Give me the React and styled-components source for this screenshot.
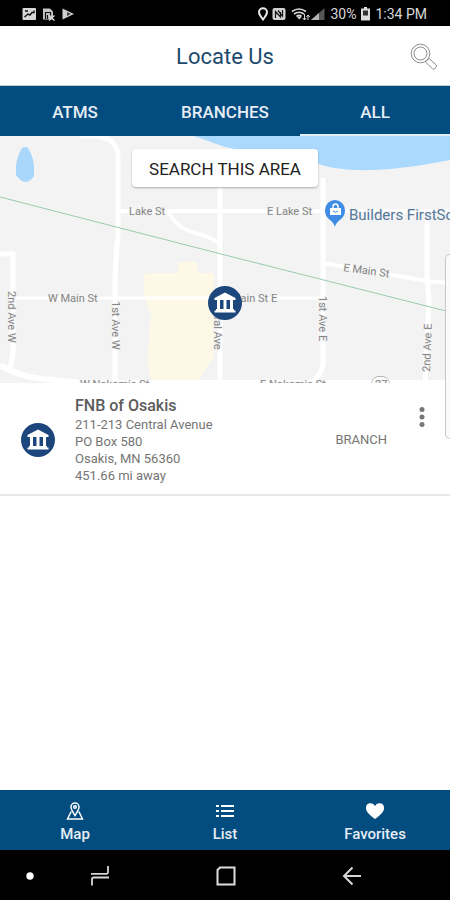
import { useState } from "react";
import styled, { createGlobalStyle } from "styled-components";

const tabs = ["ATMS", "BRANCHES", "ALL"];

const branches = [
  {
    name: "FNB of Osakis",
    street: "211-213 Central Avenue",
    box: "PO Box 580",
    city: "Osakis, MN 56360",
    distance: "451.66 mi away",
    type: "BRANCH",
  },
];

const BankShape = () => (
  <>
    <circle r="17" fill="#1c467c" />
    <path d="M0 -10.5L10.5 -5V-3H-10.5V-5Z" fill="#fff" />
    <path d="M-8 -3h3v9h-3zM-1.5 -3h3v9h-3zM5 -3h3v9h-3z" fill="#fff" />
    <path d="M-9 6H9V7.5H10.5V9.5H-10.5V7.5H-9Z" fill="#fff" />
  </>
);

const BankIcon = () => (
  <svg width="36" height="36" viewBox="-18 -18 36 36" aria-hidden="true">
    <BankShape />
  </svg>
);

const StatusLeftIcons = () => (
  <svg width="54" height="14" viewBox="0 0 54 14" aria-hidden="true">
    <rect x="0.5" y="1" width="13.5" height="12" rx="1" fill="#d8d8d8" />
    <path
      d="M3 4h3M2.5 10l3.5-3 2 1 2-2.5h2V3.5"
      fill="none"
      stroke="#111"
      strokeWidth="1.4"
    />
    <path d="M21 1.5h7l3 3v8h-10z" fill="#c4c4c4" />
    <path
      d="M23.5 12V5.5h5v3M25.5 8v4"
      fill="none"
      stroke="#111"
      strokeWidth="1.2"
    />
    <path d="M27 8.5l5.5 5M32.5 8.5l-5.5 5" stroke="#d8d8d8" strokeWidth="1.3" />
    <path d="M40.5 1.5L52 7l-11.5 5.5z" fill="#cfcfcf" />
    <path d="M45 5l4 2-4 2z" fill="#444" />
  </svg>
);

const StatusRightIcons = () => (
  <svg width="68" height="14" viewBox="0 0 68 14" aria-hidden="true">
    <path
      d="M6 12.5C3.5 9 2 7.5 2 5.2a4 4 0 0 1 8 0C10 7.5 8.5 9 6 12.5z"
      fill="none"
      stroke="#e8e8e8"
      strokeWidth="2"
    />
    <rect x="15.5" y="1" width="13" height="12" rx="2" fill="#d2d2d2" />
    <path
      d="M18.5 11V4.5l5 5.5V5M21 3.5l4.5 5.5V3"
      fill="none"
      stroke="#111"
      strokeWidth="1.2"
    />
    <path
      d="M35 4.5q7-5 14 0M37 7q5-3.5 10 0M39.5 9.5q2.500-2 5 0"
      fill="none"
      stroke="#d8d8d8"
      strokeWidth="1.7"
    />
    <path d="M40 10h4.500l-2.200 2.500z" fill="#d8d8d8" />
    <path
      d="M47.500 7v6M45.700 11l1.800 2 1.800-2M51 13V8M49.300 10L51 8l1.800 2"
      fill="none"
      stroke="#d8d8d8"
      strokeWidth="1"
    />
    <path d="M54 13h13.500V1z" fill="#555" />
    <path d="M54 13h8V6z" fill="#b4b4b4" />
  </svg>
);

const BatteryIcon = () => (
  <svg width="9" height="14" viewBox="0 0 9 14" aria-hidden="true">
    <path d="M3 0h3v1.500h3v12H0v-12h3z" fill="#dcdcdc" />
    <path d="M2 3.500h5v5H2z" fill="#333" />
  </svg>
);

const SearchIcon = () => (
  <svg
    width="28"
    height="28"
    viewBox="0 0 28 28"
    fill="none"
    stroke="#8d8d8d"
    strokeWidth="1"
    aria-hidden="true"
  >
    <circle cx="10.5" cy="10.5" r="9.3" />
    <circle cx="10.5" cy="10.5" r="6.5" />
    <path d="M15.5 19l3.500-3.500 7.300 6.500q1 1.200-.8 3t-3 .8z" />
  </svg>
);

const MapIcon = () => (
  <svg
    width="18"
    height="18"
    viewBox="0 0 18 18"
    fill="none"
    stroke="#fff"
    strokeWidth="1.5"
    aria-hidden="true"
  >
    <path d="M9 13.500C6.500 9.500 5 7.500 5 5a4 4 0 0 1 8 0C13 7.500 11.500 9.500 9 13.500z" />
    <circle cx="9" cy="5" r="1.300" />
    <path d="M5.200 9.500L1.500 17h15l-3.700-7.500" />
  </svg>
);

const ListIcon = () => (
  <svg
    width="18"
    height="18"
    viewBox="0 0 18 18"
    stroke="#fff"
    strokeWidth="2"
    aria-hidden="true"
  >
    <path d="M0 4h3M0 9h3M0 14h3M5 4h13M5 9h13M5 14h13" />
  </svg>
);

const HeartIcon = () => (
  <svg width="20" height="18" viewBox="0 0 20 18" aria-hidden="true">
    <path
      d="M10 17C4 12.500 1 10 1 6a4.700 4.700 0 0 1 9-2 4.700 4.700 0 0 1 9 2c0 4-3 6.500-9 11z"
      fill="#fff"
    />
  </svg>
);

const navItems = [
  { label: "Map", icon: <MapIcon /> },
  { label: "List", icon: <ListIcon /> },
  { label: "Favorites", icon: <HeartIcon /> },
];

const StreetMap = () => (
  <StMapDrawing viewBox="0 0 450 247" preserveAspectRatio="xMidYMid slice">
    <rect width="450" height="247" fill="#f3f3f3" />
    <path
      d="M144 140Q145 137 149 137H178V126H197V137H214V220L198 246H152L147 226L151 178L144 160Z"
      fill="#fef8e6"
    />
    <path d="M194 0H450V24Q360 42 318 28L225 11Z" fill="#abd9fd" />
    <path
      d="M22 12Q25 10 28 12Q34 22 34 32V40Q30 46 25 46Q20 45 16 39V30Q17 20 22 12Z"
      fill="#a9d7fb"
    />

    <g fill="none" stroke="#fff" strokeWidth="5">
      <path d="M80 0H98Q118 3 118 22V100Q116 120 115 140V246" />
      <path d="M120 75H450" strokeWidth="4" />
      <path d="M168 75Q176 92 195 97Q210 100 220 108" strokeWidth="4" />
      <path d="M220 51V246" />
      <path d="M323 42V228Q322 238 312 246" />
      <path d="M427 75V140L429 165L425 246" />
      <path d="M323 127L427 145L450 147" strokeWidth="4" />
      <path d="M15 162H323" strokeWidth="3" />
      <path d="M0 118H13V200Q14 220 10 232" />
      <path d="M0 229Q20 242 55 244Q85 248 120 247H450" strokeWidth="6" />
    </g>
    <path d="M0 61L225 119L450 176" fill="none" stroke="#9bcaab" strokeWidth="1" />

    <StMapText>
      <text x="129" y="79">Lake St</text>
      <text x="267" y="79">E Lake St</text>
      <text x="48" y="166">W Main St</text>
      <text x="231" y="166">Main St E</text>
      <text x="80" y="252">W Nokomis St</text>
      <text x="260" y="252">E Nokomis St</text>
      <text transform="translate(343 135) rotate(8)">E Main St</text>
      <text transform="translate(8 155) rotate(90)">2nd Ave W</text>
      <text transform="translate(112 165) rotate(90)">1st Ave W</text>
      <text transform="translate(214 158) rotate(90)">Central Ave</text>
      <text transform="translate(319 160) rotate(90)">1st Ave E</text>
      <text transform="translate(430 236) rotate(-88)">2nd Ave E</text>
      <rect x="372" y="241" width="17" height="14" rx="6" fill="#fff" />
      <text x="375" y="252">27</text>
    </StMapText>

    <path
      d="M335 91C333 83 325 84 325 74a10 10 0 0 1 20 0C345 84 337 83 335 91z"
      fill="#3f8ce4"
    />
    <path d="M330 72h11v7h-11z" fill="#fff" />
    <path
      d="M333 72v-1.500a2.500 2.500 0 0 1 5 0V72"
      fill="none"
      stroke="#fff"
      strokeWidth="1.4"
    />
    <path d="M333 75q2.500 2.500 5 0" fill="none" stroke="#3f8ce4" />
    <StPlaceText x="349" y="84">Builders FirstSource</StPlaceText>

    <g transform="translate(225 167)">
      <BankShape />
    </g>
  </StMapDrawing>
);

const App = () => {
  const [tab, setTab] = useState("ALL");

  return (
    <StPage>
      <GlobalStyle />
      <StStatusBar>
        <StatusLeftIcons />
        <StStatusGroup>
          <StatusRightIcons />
          <span>30%</span>
          <BatteryIcon />
          <span>1:34 PM</span>
        </StStatusGroup>
      </StStatusBar>

      <StHeader>
        <StTitle>Locate Us</StTitle>
        <StSearchButton aria-label="Search">
          <SearchIcon />
        </StSearchButton>
      </StHeader>

      <StTabs>
        {tabs.map((name) => (
          <StTab key={name} $active={tab === name} onClick={() => setTab(name)}>
            {name}
          </StTab>
        ))}
      </StTabs>

      <StMain>
        <StMap>
          <StreetMap />
          <StAreaButton>SEARCH THIS AREA</StAreaButton>
        </StMap>
        {branches.map((branch) => (
          <StBranch key={branch.name}>
            <BankIcon />
            <StBranchInfo>
              <StBranchName>{branch.name}</StBranchName>
              <p>{branch.street}</p>
              <p>{branch.box}</p>
              <p>{branch.city}</p>
              <p>{branch.distance}</p>
            </StBranchInfo>
            <StBranchType>{branch.type}</StBranchType>
            <StMoreButton aria-label="More">
              <svg width="6" height="20" viewBox="0 0 6 20" fill="#777">
                <circle cx="3" cy="2.5" r="2.5" />
                <circle cx="3" cy="10" r="2.5" />
                <circle cx="3" cy="17.5" r="2.5" />
              </svg>
            </StMoreButton>
          </StBranch>
        ))}
        <StEdgeHandle />
      </StMain>

      <StBottomNav>
        {navItems.map((item) => (
          <StNavButton key={item.label}>
            {item.icon}
            {item.label}
          </StNavButton>
        ))}
      </StBottomNav>

      <StSystemBar>
        <StSystemButton aria-label="Hide bar">
          <svg width="8" height="8" viewBox="0 0 8 8">
            <circle cx="4" cy="4" r="3.7" fill="#fff" />
          </svg>
        </StSystemButton>
        <StSystemKeys>
          <StSystemButton aria-label="Recent apps">
            <svg
              width="20"
              height="20"
              viewBox="0 0 20 20"
              fill="none"
              stroke="#d6d6d6"
              strokeWidth="1.8"
            >
              <path d="M1 7.800h15.500q1.500 0 1.500-1.500V0M19 11.500H3.500Q2 11.500 2 13v6.500" />
            </svg>
          </StSystemButton>
          <StSystemButton aria-label="Home">
            <svg
              width="20"
              height="20"
              viewBox="0 0 20 20"
              fill="none"
              stroke="#dedede"
              strokeWidth="2"
            >
              <path d="M4 1.500H18.500V18.500H1.500V4z" />
            </svg>
          </StSystemButton>
          <StSystemButton aria-label="Back">
            <svg
              width="20"
              height="20"
              viewBox="0 0 20 20"
              fill="none"
              stroke="#d6d6d6"
              strokeWidth="2"
            >
              <path d="M19 10H2.500M10.500 1.500L2 10l8.500 8.500" />
            </svg>
          </StSystemButton>
        </StSystemKeys>
      </StSystemBar>
    </StPage>
  );
};

export default App;

const GlobalStyle = createGlobalStyle`
  * {
    box-sizing: border-box;
  }
  body {
    margin: 0;
    background-color: #fff;
    font-family: Roboto, "Liberation Sans", sans-serif;
  }
  button {
    border: none;
    padding: 0;
    background: none;
    color: inherit;
    font-family: inherit;
    cursor: pointer;
  }
  h1, h2, p {
    margin: 0;
  }
  svg {
    display: block;
    flex: none;
  }
`;

const StPage = styled.div`
  display: flex;
  flex-direction: column;
  min-height: 100vh;
`;

const StStatusBar = styled.div`
  display: flex;
  justify-content: space-between;
  align-items: center;
  height: 26px;
  padding: 2px 23px 0 22px;
  background-color: #000;
  color: #d8d8d8;
  font-size: 14px;
`;

const StStatusGroup = styled.div`
  display: flex;
  align-items: center;
  gap: 5px;
`;

const StHeader = styled.header`
  display: grid;
  grid-template-columns: 1fr auto 1fr;
  align-items: center;
  height: 60px;
  padding: 2px 12px 0;
  border-bottom: 1px solid #c4ccd6;
`;

const StTitle = styled.h1`
  grid-column: 2;
  color: #1d4b6e;
  font-size: 22px;
  font-weight: 400;
`;

const StSearchButton = styled.button`
  justify-self: end;
`;

const StTabs = styled.div`
  display: grid;
  grid-template-columns: repeat(3, 1fr);
  height: 50px;
  background-color: #034c80;
  color: #e6edf3;
`;

const StTab = styled.button`
  padding-top: 4px;
  border-bottom: 2px solid ${({ $active }) => ($active ? "#e3edf5" : "#034c80")};
  font-size: 17px;
  font-weight: 500;
`;

const StMain = styled.main`
  position: relative;
  flex: 1;
`;

const StMap = styled.div`
  position: relative;
  display: flex;
  justify-content: center;
  align-items: flex-start;
  height: 247px;
  padding-top: 13px;
  overflow: hidden;
`;

const StMapDrawing = styled.svg`
  position: absolute;
  inset: 0;
  width: 100%;
  height: 100%;
`;

const StMapText = styled.g`
  fill: #858585;
  font-size: 11px;
  stroke: #f3f3f3;
  stroke-width: 2px;
  paint-order: stroke;

  rect {
    fill: #fff;
    stroke: #777;
    stroke-width: 1px;
  }
`;

const StPlaceText = styled.text`
  fill: #55789b;
  font-size: 15px;
  stroke: #f3f3f3;
  stroke-width: 2px;
  paint-order: stroke;
`;

const StAreaButton = styled.button`
  position: relative;
  height: 38px;
  padding: 2px 17px 0;
  border-radius: 4px;
  background-color: #fff;
  box-shadow: 0 1px 2px rgba(0, 0, 0, 0.3);
  color: #222;
  font-size: 17px;
`;

const StBranch = styled.section`
  display: flex;
  align-items: center;
  padding: 12px 23px 10px 20px;
  border-bottom: 2px solid #e8e8e8;
  color: #757575;
`;

const StBranchInfo = styled.div`
  flex: 1;
  padding-left: 19px;
  font-size: 13px;
  line-height: 17px;
`;

const StBranchName = styled.h2`
  color: #5c5c5c;
  font-size: 16px;
  font-weight: 500;
  line-height: 21px;
`;

const StBranchType = styled.span`
  font-size: 13px;
`;

const StMoreButton = styled.button`
  align-self: flex-start;
  padding: 12px 2px;
  margin-left: 30px;
`;

const StEdgeHandle = styled.div`
  position: absolute;
  top: 118px;
  right: 0;
  width: 5px;
  height: 185px;
  border: 1px solid #c8c8c8;
  border-right: none;
  border-radius: 5px 0 0 5px;
  background-color: #fafafa;
`;

const StBottomNav = styled.nav`
  display: grid;
  grid-template-columns: repeat(3, 1fr);
  height: 60px;
  background-color: #034c80;
`;

const StNavButton = styled.button`
  display: flex;
  flex-direction: column;
  align-items: center;
  gap: 5px;
  padding-top: 12px;
  color: #e6edf3;
  font-size: 15px;
  font-weight: 500;
  line-height: 18px;
`;

const StSystemBar = styled.div`
  display: flex;
  align-items: center;
  gap: 56px;
  height: 50px;
  padding: 2px 88px 0 26px;
  background-color: #000;
`;

const StSystemKeys = styled.div`
  display: flex;
  flex: 1;
  justify-content: space-between;
`;

const StSystemButton = styled.button`
  display: flex;
`;
